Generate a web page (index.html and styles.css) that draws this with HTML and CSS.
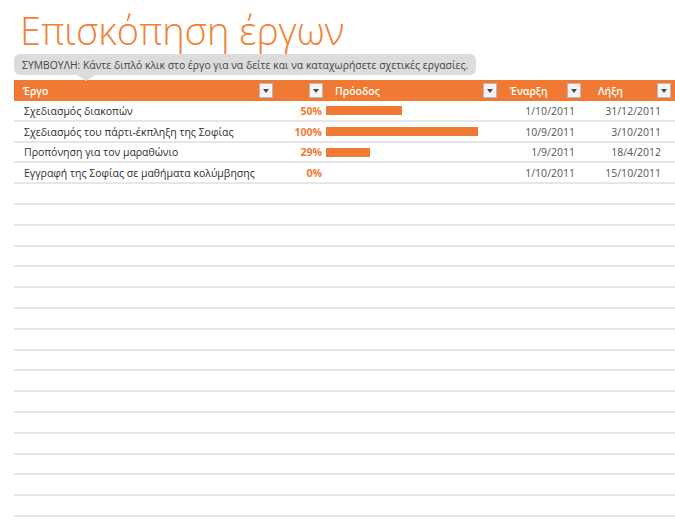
FILE: index.html
```html
<!DOCTYPE html>
<html lang="el">
<head>
<meta charset="utf-8">
<title>Επισκόπηση έργων</title>
<link rel="stylesheet" href="styles.css">
</head>
<body>
<div class="page">
  <h1 class="title">Επισκόπηση έργων</h1>
  <div class="tip">ΣΥΜΒΟΥΛΗ: Κάντε διπλό κλικ στο έργο για να δείτε και να καταχωρήσετε σχετικές εργασίες.</div>
  <div class="table">
    <div class="row head">
      <div class="cell c-task"><span>Έργο</span><span class="dd"></span></div>
      <div class="cell c-pct"><span></span><span class="dd"></span></div>
      <div class="cell c-bar"><span>Πρόοδος</span><span class="dd"></span></div>
      <div class="cell c-start"><span>Έναρξη</span><span class="dd"></span></div>
      <div class="cell c-end"><span>Λήξη</span><span class="dd"></span></div>
    </div>
    <div class="row">
      <div class="cell c-task">Σχεδιασμός διακοπών</div>
      <div class="cell c-pct">50%</div>
      <div class="cell c-bar"><span class="bar" style="width:76px"></span></div>
      <div class="cell c-start">1/10/2011</div>
      <div class="cell c-end">31/12/2011</div>
    </div>
    <div class="row">
      <div class="cell c-task">Σχεδιασμός του πάρτι-έκπληξη της Σοφίας</div>
      <div class="cell c-pct">100%</div>
      <div class="cell c-bar"><span class="bar" style="width:152px"></span></div>
      <div class="cell c-start">10/9/2011</div>
      <div class="cell c-end">3/10/2011</div>
    </div>
    <div class="row">
      <div class="cell c-task">Προπόνηση για τον μαραθώνιο</div>
      <div class="cell c-pct">29%</div>
      <div class="cell c-bar"><span class="bar" style="width:44px"></span></div>
      <div class="cell c-start">1/9/2011</div>
      <div class="cell c-end">18/4/2012</div>
    </div>
    <div class="row">
      <div class="cell c-task">Εγγραφή της Σοφίας σε μαθήματα κολύμβησης</div>
      <div class="cell c-pct">0%</div>
      <div class="cell c-bar"></div>
      <div class="cell c-start">1/10/2011</div>
      <div class="cell c-end">15/10/2011</div>
    </div>
    <div class="row empty"></div>
    <div class="row empty"></div>
    <div class="row empty"></div>
    <div class="row empty"></div>
    <div class="row empty"></div>
    <div class="row empty"></div>
    <div class="row empty"></div>
    <div class="row empty"></div>
    <div class="row empty"></div>
    <div class="row empty"></div>
    <div class="row empty"></div>
    <div class="row empty"></div>
    <div class="row empty"></div>
    <div class="row empty"></div>
    <div class="row empty"></div>
    <div class="row empty"></div>
    <div class="row empty"></div>
  </div>
</div>
</body>
</html>
```
FILE: styles.css
```css
html, body {
  margin: 0;
  padding: 0;
  background: #ffffff;
  overflow: hidden;
}
body {
  font-family: "Open Sans", "Noto Sans", "DejaVu Sans", sans-serif;
  color: #333;
}
.page {
  width: 675px;
  height: 520px;
  overflow: hidden;
}
.title {
  margin: 0;
  padding: 9px 0 0 20px;
  height: 48px;
  box-sizing: border-box;
  font-family: "Open Sans", "Noto Sans", sans-serif;
  font-weight: 300;
  font-size: 38px;
  line-height: 42px;
  color: #f28237;
  letter-spacing: 0;
  white-space: nowrap;
}
.tip {
  position: relative;
  margin: 6px 0 0 14px;
  width: 462px;
  height: 21px;
  box-sizing: border-box;
  padding: 0 0 0 8px;
  background: #dcdcdc;
  border-radius: 6px;
  font-size: 10.4px;
  line-height: 22px;
  color: #454545;
  white-space: nowrap;
}
.tip::after {
  content: "";
  position: absolute;
  left: 63px;
  top: 21px;
  border-left: 9px solid transparent;
  border-right: 9px solid transparent;
  border-top: 6px solid #dcdcdc;
  z-index: 2;
}
.table {
  margin: 5px 0 0 14px;
}
.row {
  display: grid;
  grid-template-columns: 262px 50px 174px 84px 91px;
  height: 20.8px;
  box-sizing: border-box;
  border-bottom: 2px solid #e6e6e6;
  font-size: 10.5px;
  padding-top: 1px;
}
.row.head {
  height: 21px;
  padding-top: 0;
  background: #f07a33;
  border-bottom: none;
  color: #fff;
  font-weight: 600;
}
.cell {
  display: flex;
  align-items: center;
  white-space: nowrap;
  overflow: hidden;
}
.head .cell {
  justify-content: space-between;
  padding-right: 3px;
}
.head .c-task { padding-left: 9px; }
.head .c-bar { padding-left: 9px; }
.head .c-start { padding-left: 10px; }
.head .c-end { padding-left: 14px; padding-right: 4px; }
.dd {
  position: relative;
  width: 14px;
  height: 15px;
  box-sizing: border-box;
  background: #f4f4f4;
  border: 1px solid #b9b9b9;
  flex: none;
}
.dd::after {
  content: "";
  position: absolute;
  left: 3px;
  top: 5px;
  border-left: 3.5px solid transparent;
  border-right: 3.5px solid transparent;
  border-top: 4px solid #4a4a4a;
}
.row:not(.head) .c-task {
  padding-left: 10px;
  color: #2e2e2e;
}
.row:not(.head) .c-pct {
  justify-content: flex-end;
  padding-right: 4px;
  color: #f07a33;
  font-weight: 700;
}
.bar {
  display: block;
  height: 9px;
  background: #f07a33;
}
.row:not(.head) .c-start {
  justify-content: flex-end;
  padding-right: 9px;
  color: #555;
}
.row:not(.head) .c-end {
  justify-content: flex-end;
  padding-right: 14px;
  color: #555;
}
```
